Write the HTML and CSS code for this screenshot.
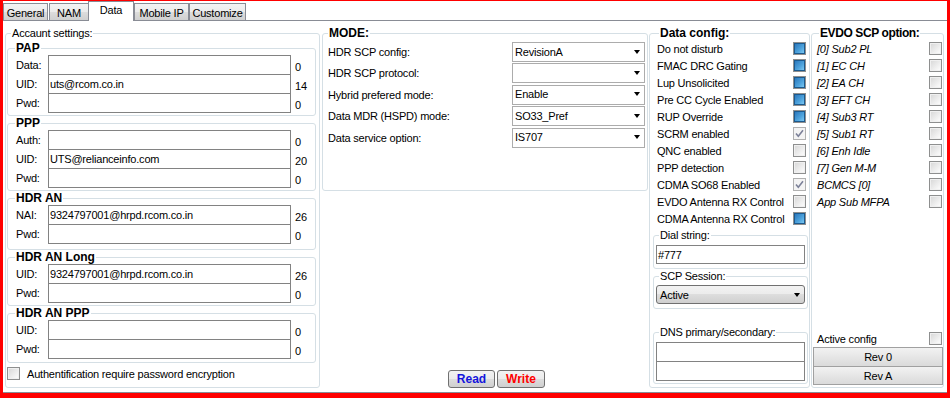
FILE: index.html
```html
<!DOCTYPE html>
<html>
<head>
<meta charset="utf-8">
<link rel="stylesheet" href="styles.css">
</head>
<body>
<div class="window">
  <div class="tabs">
    <div class="tab t-general">General</div>
    <div class="tab t-nam">NAM</div>
    <div class="tab t-data active">Data</div>
    <div class="tab t-mip">Mobile IP</div>
    <div class="tab t-cust">Customize</div>
  </div>
  <div class="panel">
    <fieldset class="grp account">
      <legend>Accaunt settings:</legend>
      <fieldset class="sub pap">
        <legend>PAP</legend>
        <div class="frow"><span class="flabel">Data:</span><span class="tb"></span><span class="cnt">0</span></div>
        <div class="frow"><span class="flabel">UID:</span><span class="tb">uts@rcom.co.in</span><span class="cnt">14</span></div>
        <div class="frow"><span class="flabel">Pwd:</span><span class="tb"></span><span class="cnt">0</span></div>
      </fieldset>
      <fieldset class="sub ppp">
        <legend>PPP</legend>
        <div class="frow"><span class="flabel">Auth:</span><span class="tb"></span><span class="cnt">0</span></div>
        <div class="frow"><span class="flabel">UID:</span><span class="tb">UTS@relianceinfo.com</span><span class="cnt">20</span></div>
        <div class="frow"><span class="flabel">Pwd:</span><span class="tb"></span><span class="cnt">0</span></div>
      </fieldset>
      <fieldset class="sub hdran">
        <legend>HDR AN</legend>
        <div class="frow"><span class="flabel">NAI:</span><span class="tb">9324797001@hrpd.rcom.co.in</span><span class="cnt">26</span></div>
        <div class="frow"><span class="flabel">Pwd:</span><span class="tb"></span><span class="cnt">0</span></div>
      </fieldset>
      <fieldset class="sub hdrlong">
        <legend>HDR AN Long</legend>
        <div class="frow"><span class="flabel">UID:</span><span class="tb">9324797001@hrpd.rcom.co.in</span><span class="cnt">26</span></div>
        <div class="frow"><span class="flabel">Pwd:</span><span class="tb"></span><span class="cnt">0</span></div>
      </fieldset>
      <fieldset class="sub hdrppp">
        <legend>HDR AN PPP</legend>
        <div class="frow"><span class="flabel">UID:</span><span class="tb"></span><span class="cnt">0</span></div>
        <div class="frow"><span class="flabel">Pwd:</span><span class="tb"></span><span class="cnt">0</span></div>
      </fieldset>
      <div class="encrow"><span class="cb"></span><span>Authentification require password encryption</span></div>
    </fieldset>

    <div class="mid">
      <fieldset class="grp mode">
        <legend>MODE:</legend>
        <div class="mrow"><span class="mlabel">HDR SCP config:</span><span class="sel">RevisionA</span></div>
        <div class="mrow"><span class="mlabel">HDR SCP protocol:</span><span class="sel"></span></div>
        <div class="mrow"><span class="mlabel">Hybrid prefered mode:</span><span class="sel">Enable</span></div>
        <div class="mrow"><span class="mlabel">Data MDR (HSPD) mode:</span><span class="sel">SO33_Pref</span></div>
        <div class="mrow"><span class="mlabel">Data service option:</span><span class="sel">IS707</span></div>
      </fieldset>
      <div class="rw">
        <span class="btn read">Read</span>
        <span class="btn write">Write</span>
      </div>
    </div>

    <fieldset class="grp dcfg">
      <legend>Data config:</legend>
      <div class="crow"><span>Do not disturb</span><span class="cb fill"></span></div>
      <div class="crow"><span>FMAC DRC Gating</span><span class="cb fill"></span></div>
      <div class="crow"><span>Lup Unsolicited</span><span class="cb fill"></span></div>
      <div class="crow"><span>Pre CC Cycle Enabled</span><span class="cb fill"></span></div>
      <div class="crow"><span>RUP Override</span><span class="cb fill"></span></div>
      <div class="crow"><span>SCRM enabled</span><span class="cb checked"><svg width="11" height="11" viewBox="0 0 11 11"><path d="M2 5.5 L4.3 8.2 L9 2.2" fill="none" stroke="#7c8199" stroke-width="1.6"/></svg></span></div>
      <div class="crow"><span>QNC enabled</span><span class="cb"></span></div>
      <div class="crow"><span>PPP detection</span><span class="cb"></span></div>
      <div class="crow"><span>CDMA SO68 Enabled</span><span class="cb checked"><svg width="11" height="11" viewBox="0 0 11 11"><path d="M2 5.5 L4.3 8.2 L9 2.2" fill="none" stroke="#7c8199" stroke-width="1.6"/></svg></span></div>
      <div class="crow"><span>EVDO Antenna RX Control</span><span class="cb"></span></div>
      <div class="crow"><span>CDMA Antenna RX Control</span><span class="cb fill"></span></div>
      <fieldset class="sub2 dial">
        <legend>Dial string:</legend>
        <div class="tb wide">#777</div>
      </fieldset>
      <fieldset class="sub2 scp">
        <legend>SCP Session:</legend>
        <div class="gsel">Active</div>
      </fieldset>
      <fieldset class="sub2 dns">
        <legend>DNS primary/secondary:</legend>
        <div class="tb wide"></div>
        <div class="tb wide second"></div>
      </fieldset>
    </fieldset>

    <fieldset class="grp evdo">
      <legend>EVDO SCP option:</legend>
      <div class="crow it"><span>[0] Sub2 PL</span><span class="cb"></span></div>
      <div class="crow it"><span>[1] EC CH</span><span class="cb"></span></div>
      <div class="crow it"><span>[2] EA CH</span><span class="cb"></span></div>
      <div class="crow it"><span>[3] EFT CH</span><span class="cb"></span></div>
      <div class="crow it"><span>[4] Sub3 RT</span><span class="cb"></span></div>
      <div class="crow it"><span>[5] Sub1 RT</span><span class="cb"></span></div>
      <div class="crow it"><span>[6] Enh Idle</span><span class="cb"></span></div>
      <div class="crow it"><span>[7] Gen M-M</span><span class="cb"></span></div>
      <div class="crow it"><span>BCMCS [0]</span><span class="cb"></span></div>
      <div class="crow it"><span>App Sub MFPA</span><span class="cb"></span></div>
      <div class="evbottom">
        <div class="crow"><span>Active config</span><span class="cb"></span></div>
        <div class="rev">Rev 0</div>
        <div class="rev reva">Rev A</div>
      </div>
    </fieldset>
  </div>
</div>
</body>
</html>
```
FILE: styles.css
```css
* { box-sizing: border-box; }
html, body { margin: 0; padding: 0; }
body {
  width: 950px;
  height: 398px;
  overflow: hidden;
  background: #f00;
  font-family: "Liberation Sans", Arial, sans-serif;
  font-size: 11px;
  letter-spacing: -0.2px;
  color: #000;
}
.window {
  margin: 1px 3px 0 3px;
  height: 392px;
  background: #fff;
  display: flex;
  flex-direction: column;
}
/* tabs */
.tabs {
  display: flex;
  align-items: flex-end;
  height: 19px;
  flex: none;
}
.tab {
  height: 17px;
  border: 1px solid #898c95;
  border-bottom: none;
  background: linear-gradient(#f3f3f3, #ebebeb 50%, #dddddd 50%, #d0d0d0);
  display: flex;
  align-items: center;
  justify-content: center;
  padding-top: 1px;
}
.t-general { width: 45px; margin-right: 1px; }
.t-nam { width: 40px; }
.t-data { width: 46px; margin-left: -1px; }
.t-mip { width: 55px; }
.t-cust { width: 57px; }
.tab.active {
  height: 20px;
  margin-bottom: -1px;
  background: #fff;
  position: relative;
  z-index: 2;
  align-items: flex-start;
  padding-top: 2px;
}
.panel {
  flex: 1;
  border-top: 1px solid #898c95;
  border-bottom: 1px solid #898c95;
  display: flex;
  padding: 5px 0 4px 2px;
}
/* group boxes */
.grp, .sub, .sub2 {
  margin: 0;
  border: 1px solid #d5dfe5;
  border-radius: 3px;
  min-width: 0;
}
.grp > legend, .sub > legend, .sub2 > legend {
  padding: 0 1px;
  line-height: 14px;
  height: 14px;
}
.account {
  width: 315px;
  padding: 0 3px 0 1px;
  display: flex;
  flex-direction: column;
}
.account > legend { margin-left: 4px; }
.sub {
  padding: 0 0 3px 8px;
}
.sub > legend {
  font-weight: bold;
  font-size: 12px;
  letter-spacing: 0;
  margin-left: -1px;
}
.pap { margin-top: 1px; }
.hdran { padding-bottom: 6px; }
.hdrppp { padding-bottom: 4px; }
.frow {
  display: flex;
  height: 19px;
}
.flabel {
  width: 32px;
  line-height: 19px;
  padding-top: 1px;
}
.tb {
  display: block;
  width: 243px;
  height: 20px;
  border: 1px solid #828282;
  background: #fff;
  line-height: 16px;
  padding: 1px 1px 0;
  flex: none;
  position: relative;
}
.cnt {
  margin-left: 4px;
  line-height: 19px;
  padding-top: 3px;
}
.encrow {
  display: flex;
  align-items: center;
  margin-top: 4px;
  height: 13px;
}
.encrow .cb { margin-right: 7px; }

/* checkboxes */
.cb {
  width: 13px;
  height: 13px;
  flex: none;
  border: 1px solid #8e8f8f;
  background: linear-gradient(135deg, #d6d6d6, #f7f7f7 80%, #fdfdfd);
  box-shadow: inset 0 0 0 1px #f0f0f0;
  display: flex;
  align-items: center;
  justify-content: center;
}
.cb.fill::after {
  content: "";
  width: 9px;
  height: 9px;
  border: 1px solid #1c5a8e;
  background: linear-gradient(135deg, #2a78bd, #4fa4dd 60%, #7cc8f2);
}
.cb.checked {
  border-color: #b1b1b1;
  background: #f4f4f4;
  box-shadow: none;
}

/* middle column */
.mid {
  width: 326px;
  margin-left: 2px;
  display: flex;
  flex-direction: column;
  justify-content: space-between;
}
.mode {
  height: 165px;
  padding: 2px 2px 0 5px;
}
.mode > legend {
  font-weight: bold;
  font-size: 12px;
  letter-spacing: 0;
}
.mrow {
  display: flex;
  align-items: center;
  height: 20px;
  margin-bottom: 1.4px;
}
.mlabel { flex: 1; }
.sel {
  width: 133px;
  height: 20px;
  border: 1px solid #acacac;
  background: #fff;
  display: flex;
  align-items: center;
  padding: 0 4px 1px 2px;
}
.sel::after, .gsel::after {
  content: "";
  margin-left: auto;
  border-left: 3.5px solid transparent;
  border-right: 3.5px solid transparent;
  border-top: 4px solid #000;
}
.rw {
  display: flex;
  justify-content: center;
  gap: 2px;
  padding-left: 23px;
  height: 18px;
}
.btn {
  height: 18px;
  border: 1px solid #707070;
  border-radius: 3px;
  background: linear-gradient(#f2f2f2, #ebebeb 50%, #dddddd 50%, #cfcfcf);
  font-weight: bold;
  font-size: 12px;
  letter-spacing: 0;
  display: flex;
  align-items: center;
  justify-content: center;
}
.read { width: 47px; color: #1414dc; }
.write { width: 48px; color: #ff0000; }

/* data config */
.dcfg {
  width: 161px;
  margin-left: 1px;
  padding: 0 1px 3px 3px;
  display: flex;
  flex-direction: column;
}
.dcfg > legend, .evdo > legend {
  font-weight: bold;
  font-size: 12px;
  letter-spacing: 0;
}
.dcfg > legend { margin-left: 6px; }
.crow {
  display: flex;
  align-items: center;
  justify-content: space-between;
  height: 17px;
  padding: 0 2px 0 4px;
  flex: none;
}
.sub2 {
  padding: 3px 2px 4px 2px;
}
.sub2 > legend { margin-left: 3px; }
.dial { margin-top: 1px; }
.tb.wide { width: 149px; height: 19px; }
.dns { margin-top: auto; padding-bottom: 2px; }
.dns .tb.wide { height: 20px; }
.dns .tb.second { margin-top: -1px; }
.scp { padding-top: 2px; }
.gsel {
  height: 19px;
  border: 1px solid #707070;
  border-radius: 3px;
  background: linear-gradient(#f2f2f2, #ebebeb 50%, #dddddd 50%, #cfcfcf);
  display: flex;
  align-items: center;
  padding: 0 4px 0 3px;
}

/* evdo */
.evdo {
  width: 133px;
  margin-left: 1px;
  padding: 0 0 2px 1px;
  display: flex;
  flex-direction: column;
}
.evdo > legend { margin-left: 6px; letter-spacing: -0.4px; }
.evdo .crow { padding: 0 1px 0 4px; }
.crow.it span:first-child { font-style: italic; }
.evbottom {
  margin-top: auto;
  display: flex;
  flex-direction: column;
}
.rev {
  height: 20px;
  border: 1px solid #a0a0a0;
  background: linear-gradient(#f2f2f2, #e6e6e6 50%, #dadada);
  display: flex;
  align-items: center;
  justify-content: center;
}
.rev.reva { height: 19px; margin-top: -1px; }
```
